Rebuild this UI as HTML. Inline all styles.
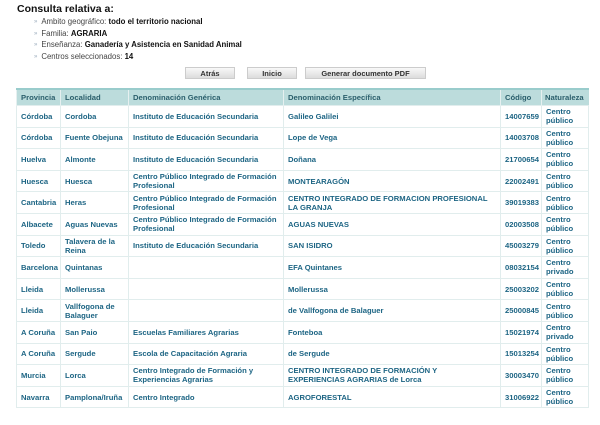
<!DOCTYPE html>
<html><head><meta charset="utf-8"><style>
body{margin:0;width:600px;height:425px;background:#fff;font-family:"Liberation Sans",sans-serif;position:relative;overflow:hidden}
h1{position:absolute;left:17px;top:3px;margin:0;font-size:10.5px;font-weight:bold;color:#111}
ul{position:absolute;left:34px;top:16px;margin:0;padding:0;list-style:none;font-size:7.8px;color:#444}
li{height:11.5px;line-height:11.5px}
li:before{content:"»";color:#9ab;font-size:6px;margin-right:4px;position:relative;top:-1px}
li b{color:#111}
.btn{position:absolute;top:67px;height:12px;background:linear-gradient(#f8f8f8,#dcdcdc);border:1px solid #ccc;font-size:7.5px;font-weight:bold;color:#333;text-align:center;line-height:12px;box-sizing:border-box}
table{position:absolute;left:16px;top:88px;width:572px;border-collapse:collapse;table-layout:fixed;font-size:7.65px;font-weight:bold;color:#1d6584}
th{background:#bcdcdc;color:#2b5f6c;text-align:left;height:15px;padding:0 4px;border-top:2px solid #9cc;border-left:1px solid #e6f0f0}
td{height:20.6px;padding:0 4px;border:1px solid #e1eded;line-height:9px;vertical-align:middle}
td.c{text-align:right;padding:0 2px}
</style></head><body>
<h1>Consulta relativa a:</h1>
<ul>
<li>Ambito geográfico: <b>todo el territorio nacional</b></li>
<li>Familia: <b>AGRARIA</b></li>
<li>Enseñanza: <b>Ganadería y Asistencia en Sanidad Animal</b></li>
<li>Centros seleccionados: <b>14</b></li>
</ul>
<div class="btn" style="left:185px;width:50px">Atrás</div>
<div class="btn" style="left:247px;width:50px">Inicio</div>
<div class="btn" style="left:305px;width:121px">Generar documento PDF</div>
<table>
<colgroup><col style="width:44px"><col style="width:68px"><col style="width:155px"><col style="width:217px"><col style="width:41px"><col style="width:47px"></colgroup>
<tr><th>Provincia</th><th>Localidad</th><th>Denominación Genérica</th><th>Denominación Específica</th><th>Código</th><th style="padding:0 3px">Naturaleza</th></tr>
<tr><td>Córdoba</td><td>Cordoba</td><td>Instituto de Educación Secundaria</td><td>Galileo Galilei</td><td class="c">14007659</td><td>Centro público</td></tr>
<tr><td>Córdoba</td><td>Fuente Obejuna</td><td>Instituto de Educación Secundaria</td><td>Lope de Vega</td><td class="c">14003708</td><td>Centro público</td></tr>
<tr><td>Huelva</td><td>Almonte</td><td>Instituto de Educación Secundaria</td><td>Doñana</td><td class="c">21700654</td><td>Centro público</td></tr>
<tr><td>Huesca</td><td>Huesca</td><td>Centro Público Integrado de Formación<br>Profesional</td><td>MONTEARAGÓN</td><td class="c">22002491</td><td>Centro público</td></tr>
<tr><td>Cantabria</td><td>Heras</td><td>Centro Público Integrado de Formación<br>Profesional</td><td>CENTRO INTEGRADO DE FORMACION PROFESIONAL LA GRANJA</td><td class="c">39019383</td><td>Centro público</td></tr>
<tr><td>Albacete</td><td>Aguas Nuevas</td><td>Centro Público Integrado de Formación<br>Profesional</td><td>AGUAS NUEVAS</td><td class="c">02003508</td><td>Centro público</td></tr>
<tr><td>Toledo</td><td>Talavera de la Reina</td><td>Instituto de Educación Secundaria</td><td>SAN ISIDRO</td><td class="c">45003279</td><td>Centro público</td></tr>
<tr><td>Barcelona</td><td>Quintanas</td><td></td><td>EFA Quintanes</td><td class="c">08032154</td><td>Centro privado</td></tr>
<tr><td>Lleida</td><td>Mollerussa</td><td></td><td>Mollerussa</td><td class="c">25003202</td><td>Centro público</td></tr>
<tr><td>Lleida</td><td>Vallfogona de Balaguer</td><td></td><td>de Vallfogona de Balaguer</td><td class="c">25000845</td><td>Centro público</td></tr>
<tr><td>A Coruña</td><td>San Paio</td><td>Escuelas Familiares Agrarias</td><td>Fonteboa</td><td class="c">15021974</td><td>Centro privado</td></tr>
<tr><td>A Coruña</td><td>Sergude</td><td>Escola de Capacitación Agraria</td><td>de Sergude</td><td class="c">15013254</td><td>Centro público</td></tr>
<tr><td>Murcia</td><td>Lorca</td><td>Centro Integrado de Formación y<br>Experiencias Agrarias</td><td>CENTRO INTEGRADO DE FORMACIÓN Y<br>EXPERIENCIAS AGRARIAS de Lorca</td><td class="c">30003470</td><td>Centro público</td></tr>
<tr><td>Navarra</td><td>Pamplona/Iruña</td><td>Centro Integrado</td><td>AGROFORESTAL</td><td class="c">31006922</td><td>Centro público</td></tr>
</table>
</body></html>
